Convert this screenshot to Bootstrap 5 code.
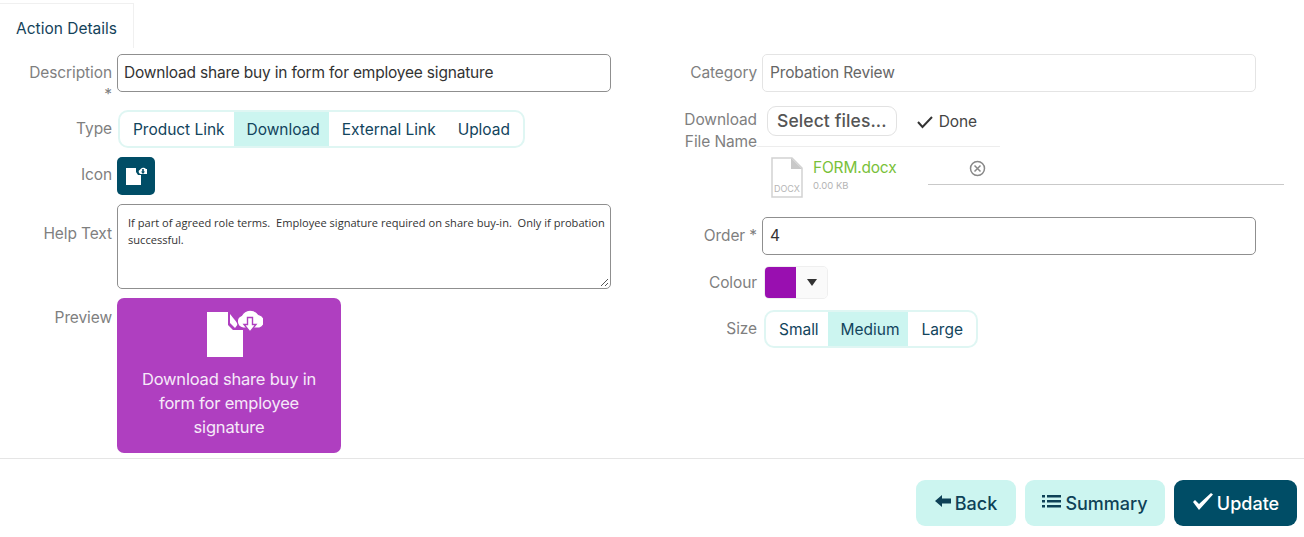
<!DOCTYPE html>
<html lang="en">
<head>
<meta charset="utf-8">
<title>Action Details</title>
<link rel="stylesheet" href="https://cdn.jsdelivr.net/npm/bootstrap@5.3.0/dist/css/bootstrap.min.css">
<style>
html,body{height:537px;overflow:hidden}
body{font-family:Inter,"Liberation Sans",sans-serif;background:#fff;color:#333;font-size:16px}
.tab-strip{height:48px;padding-top:3px}
.tab-one{width:134px;height:45px;border:1px solid #f0f0f0;border-left:0;border-bottom:0;color:#14425a;font-size:15.5px;letter-spacing:0;padding-top:5px}
.form-area{height:407px;padding-top:6px}
.side-l,.side-r{width:652px}
.lab{color:#7f7f7f;font-size:15.5px;letter-spacing:-.1px;text-align:right;line-height:22px;flex:none}
.side-l .lab{width:112px}
.side-r .lab{width:105px}
.lab-top{padding-top:8px}
.lab-icon{margin-top:-2px}
.lab-help{padding-top:19px}
.lab-prev{padding-top:9px}
.lab-dl{margin-top:3px}
.row-desc{height:38px}
.val{margin-left:5px}
.box{width:494px;height:38px;border:1px solid #8f8f8f;border-radius:5px;padding:0 7px;font-size:15.5px;letter-spacing:-.2px;color:#333}
.box-first{padding-left:6px}
.box-soft{border-color:#e4e4e4;color:#666;letter-spacing:-.15px}
.seg{border:2px solid #dff6f3;border-radius:10px;height:38px;overflow:hidden}
.seg-l{margin-left:6px}
.seg-r{margin-left:7px}
.seg-item{height:34px;padding:1px 9px 0 13px;color:#12445c;font-size:15.5px;letter-spacing:-.03px}
.seg-item:last-child{padding-right:13px}
.seg-on{background:#ccf5f0}
.row-type{margin-top:18px}
.row-9{margin-top:9px}
.row-dl{margin-top:14px}
.row-order{margin-top:20px}
.row-colour{margin-top:11px}
.row-size{margin-top:11px}
.icon-btn{width:38px;height:38px;background:#004d66;border-radius:5px}
.help-box{width:494px;height:85px;border:1px solid #8f8f8f;border-radius:5px;padding:9px 4px 9px 10px;font-family:"Open Sans",Inter,sans-serif;font-size:11.08px;line-height:17px;color:#333;position:relative}
.grip{position:absolute;right:1px;bottom:1px}
.preview{width:224px;height:155px;background:#af3fc0;border-radius:7px;color:#f6e9f9;font-size:16.5px;line-height:24px;letter-spacing:-.2px;padding:12px 16px 0}
.prev-svg{margin-bottom:9px}
.dl-col{margin-left:10px}
.pick{height:30px;padding:1px 9px 0;border:1px solid #e2e2e2;border-radius:9px;font-size:17.5px;font-weight:500;color:#555;letter-spacing:.1px}
.done{color:#444;font-size:15.5px;letter-spacing:-.1px;margin-left:19px;gap:5px;margin-top:1px}
.rule-a{width:243px;height:1px;background:#ededed;margin:10px 0 0 -10px}
.file-row{height:41px;margin:3px 0 0 119px}
.file-ic{margin-top:1px}
.file-info{width:115px;margin-left:10px;padding-top:2px}
.file-name{color:#79c13a;font-size:15.5px;letter-spacing:-.2px;line-height:20px}
.file-size{color:#b4b4b4;font-size:9.5px;line-height:14px;margin-top:1px}
.file-side{width:356px;height:29px;border-bottom:1px solid #c9c9c9}
.x-mark{position:absolute;left:41px;top:4px}
.colour-pick{height:33px;border:1px solid #efefef;border-radius:5px;overflow:hidden;width:64px;margin-left:7px}
.swatch{width:31px;background:#990fb0}
.tri{flex:1;background:#fafafa}
.gap-fill{height:3px}
.foot{border-top:1px solid #e5e5e5;height:81px;padding:21px 7px 0 0;gap:9px}
.act{height:46px;border:0;border-radius:9px;font-size:18px;font-weight:500;color:#0e4157;background:#ccf5f0;padding:0}
.act:hover{background:#ccf5f0;color:#0e4157}
.act-dark,.act-dark:hover{background:#004d66;color:#fff}
.act-back{width:100px}
.act-sum{width:140px}
.act-up{width:123px}
.act-ic{margin-bottom:4px}
</style>
</head>
<body>
<div class="tab-strip"><div class="tab-one d-flex align-items-center justify-content-center">Action Details</div></div>
<div class="form-area d-flex">
  <div class="side-l">
    <div class="d-flex row-desc">
      <div class="lab lab-top">Description<br>*</div>
      <div class="box box-first val d-flex align-items-center">Download share buy in form for employee signature</div>
    </div>
    <div class="d-flex align-items-center row-type">
      <div class="lab">Type</div>
      <div class="seg seg-l d-flex">
        <div class="seg-item d-flex align-items-center">Product Link</div>
        <div class="seg-item seg-on d-flex align-items-center">Download</div>
        <div class="seg-item d-flex align-items-center">External Link</div>
        <div class="seg-item d-flex align-items-center">Upload</div>
      </div>
    </div>
    <div class="d-flex align-items-center row-9">
      <div class="lab lab-icon">Icon</div>
      <div class="icon-btn val d-flex align-items-center justify-content-center">
        <svg width="22" height="18" viewBox="0 0 22 18"><path d="M1 1h10v4l2 3h3v10H1z" fill="#fff"/><path d="M15.500 7a2.200 2.200 0 0 1-.5-4.200 3.500 3.500 0 0 1 6-.8 2.500 2.500 0 0 1 .5 5z" fill="#fff"/><path d="M17.200 2h1.600v2.500h1.200L18 7l-2-2.500h1.200z" fill="#004d66"/></svg>
      </div>
    </div>
    <div class="d-flex row-9">
      <div class="lab lab-help">Help Text</div>
      <div class="help-box val">If part of agreed role terms.&nbsp; Employee signature required on share buy-in.&nbsp; Only if probation successful.
        <svg class="grip" width="9" height="9" viewBox="0 0 9 9"><path d="M8 1L1 8M8 5L5 8" stroke="#555" stroke-width="1"/></svg>
      </div>
    </div>
    <div class="d-flex row-9">
      <div class="lab lab-prev">Preview</div>
      <div class="preview val text-center">
        <svg class="prev-svg d-block mx-auto" width="68" height="48" viewBox="0 0 68 48">
          <path d="M12 2H33V15L38 20H48V47H12Z" fill="#fff"/>
          <path d="M35 4L43 14L40 18L35 13Z" fill="#fff"/>
          <path d="M48 18a6.500 6.500 0 0 1-1.500-12.500 10 10 0 0 1 17-1 7 7 0 0 1 1 13.500z" fill="#fff" stroke="#af3fc0" stroke-width="1.200"/>
          <path d="M52.500 7.500h5v7h3.500L55 22l-6-7.500h3.500z" fill="#fff" stroke="#af3fc0" stroke-width="1.400"/>
        </svg>
        Download share buy in form for employee signature
      </div>
    </div>
  </div>
  <div class="side-r">
    <div class="d-flex row-desc">
      <div class="lab lab-top">Category</div>
      <div class="box box-soft val d-flex align-items-center">Probation Review</div>
    </div>
    <div class="d-flex row-dl">
      <div class="lab lab-dl">Download<br>File Name</div>
      <div class="dl-col">
        <div class="d-flex align-items-center">
          <div class="pick d-flex align-items-center">Select files...</div>
          <div class="done d-flex align-items-center">
            <svg width="18" height="14" viewBox="0 0 18 14"><path d="M2 7l4.500 5L16 2" fill="none" stroke="#333" stroke-width="2"/></svg>Done
          </div>
        </div>
        <div class="rule-a"></div>
      </div>
    </div>
    <div class="file-row d-flex">
      <svg class="file-ic" width="32" height="41" viewBox="0 0 32 41"><path d="M1 1h20l10 10v29H1z" fill="#fff" stroke="#d2d2d2" stroke-width="1.500"/><path d="M20 1l11 11H20z" fill="#c8c8c8"/><text x="16" y="35" text-anchor="middle" font-family="Inter,sans-serif" font-size="9" fill="#b5b5b5">DOCX</text></svg>
      <div class="file-info">
        <div class="file-name">FORM.docx</div>
        <div class="file-size">0.00 KB</div>
      </div>
      <div class="file-side position-relative">
        <svg class="x-mark" width="17" height="17" viewBox="0 0 17 17"><circle cx="8.500" cy="8.500" r="7" fill="none" stroke="#888" stroke-width="1.500"/><path d="M5.500 5.500l6 6M11.500 5.500l-6 6" stroke="#888" stroke-width="1.500"/></svg>
      </div>
    </div>
    <div class="d-flex align-items-center row-order">
      <div class="lab">Order *</div>
      <div class="box val d-flex align-items-center">4</div>
    </div>
    <div class="d-flex align-items-center row-colour">
      <div class="lab">Colour</div>
      <div class="colour-pick d-flex">
        <div class="swatch"></div>
        <div class="tri d-flex align-items-center justify-content-center"><svg width="10" height="7" viewBox="0 0 10 7"><path d="M0 0h10L5 7z" fill="#333"/></svg></div>
      </div>
    </div>
    <div class="d-flex align-items-center row-size">
      <div class="lab">Size</div>
      <div class="seg seg-r d-flex">
        <div class="seg-item d-flex align-items-center">Small</div>
        <div class="seg-item seg-on d-flex align-items-center">Medium</div>
        <div class="seg-item d-flex align-items-center">Large</div>
      </div>
    </div>
  </div>
</div>
<div class="gap-fill"></div>
<div class="foot d-flex justify-content-end">
  <button class="act act-back btn d-flex align-items-center justify-content-center gap-1">
    <svg class="act-ic" width="16" height="12" viewBox="0 0 16 12"><path d="M0 6L7 0v3.500h9v5H7V12z" fill="#0e4157"/></svg>Back</button>
  <button class="act act-sum btn d-flex align-items-center justify-content-center gap-1">
    <svg class="act-ic" width="19" height="13" viewBox="0 0 19 13"><path d="M0 0h3v2.500H0zM5 0h14v2.500H5zM0 5h3v2.500H0zM5 5h14v2.500H5zM0 10h3v2.500H0zM5 10h14v2.500H5z" fill="#0e4157"/></svg>Summary</button>
  <button class="act act-dark act-up btn d-flex align-items-center justify-content-center gap-1">
    <svg class="act-ic" width="21" height="17" viewBox="0 0 21 17"><path d="M1 9l2-2 4 4L19 0l2 1.500L7 17z" fill="#fff"/></svg>Update</button>
</div>
<script src="https://cdn.jsdelivr.net/npm/bootstrap@5.3.0/dist/js/bootstrap.bundle.min.js"></script>
</body>
</html>
